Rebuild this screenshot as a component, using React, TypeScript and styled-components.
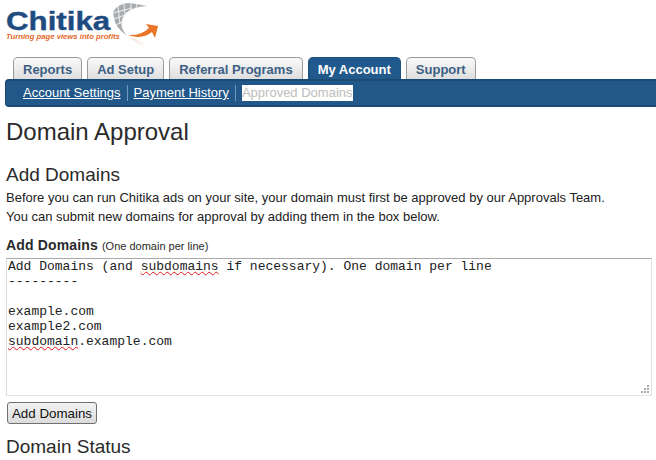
import React from 'react';
import styled, { createGlobalStyle } from 'styled-components';

const Global = createGlobalStyle`
  html, body { margin: 0; padding: 0; background: #fff; overflow: hidden; }
  body { font-family: "Liberation Sans", Arial, sans-serif; color: #222; }
`;
const Page = styled.div`width: 656px; height: 460px; overflow: hidden;`;
const Header = styled.header`height: 57px; padding-left: 6px; box-sizing: border-box;`;
const LogoWrap = styled.div`position: relative; width: 160px; height: 57px;`;
const LogoMark = styled.svg`position: absolute; left: -6px; top: 0;`;
const LogoName = styled.div`
  position: absolute; left: 0; top: 10px; font-size: 25px; font-weight: 700; line-height: 22px;
  color: #1f4c80; transform: scaleX(1.25); transform-origin: left; -webkit-text-stroke: 0.4px #1f4c80;
`;
const Tagline = styled.div`
  position: absolute; left: 0; top: 32px; font-size: 7.7px; font-weight: 700; font-style: italic;
  color: #e8692a; white-space: nowrap; line-height: 9px;
`;
const Tabs = styled.nav`display: flex; gap: 5px; padding-left: 13px; height: 22px; align-items: flex-end;`;
const Tab = styled.div<{ $active?: boolean }>`
  height: 22px; box-sizing: border-box; padding: 0 9px;
  border: 1px solid ${p => (p.$active ? '#1d4f7f' : '#9a9a9a')}; border-bottom: none;
  border-radius: 5px 5px 0 0; font-size: 13px; font-weight: 700; line-height: 23px;
  color: ${p => (p.$active ? '#fff' : '#3d5f85')};
  background: ${p => (p.$active ? 'linear-gradient(#1f5a8e,#22598b)' : 'linear-gradient(#fafafa,#dedede)')};
  white-space: nowrap;
`;
const SubBar = styled.div`
  margin-left: 5px; height: 28px; box-sizing: border-box; background: #215889;
  border-top: 2px solid #1b4a75; border-bottom: 2px solid #1b4a75; border-left: 1px solid #1b4a75;
  border-radius: 4px 0 0 4px; display: flex; align-items: center; padding-left: 17px;
`;
const SubLink = styled.a<{ $sep?: boolean }>`
  color: #fff; font-size: 13px; text-decoration: underline; line-height: 16px;
  padding-right: 6px; margin-right: 6px;
  border-right: ${p => (p.$sep ? '1px solid #6f9bc0' : 'none')};
`;
const SubCurrent = styled.span`
  background: #fff; color: #bdbdbd; font-size: 13px; line-height: 16px;
`;
const Main = styled.main`padding: 0 4px 0 6px;`;
const Title = styled.h1`font-size: 24px; font-weight: 400; margin: 11px 0 0; line-height: 28px; color: #2a2a2a;`;
const Section = styled.h2`font-size: 19px; font-weight: 400; margin: 0; line-height: 22px; color: #2a2a2a;`;
const AddHead = styled(Section)`margin-top: 18px;`;
const Para = styled.p`font-size: 13px; line-height: 19px; margin: 0; color: #222;`;
const Intro = styled.div`margin-top: 2px;`;
const Label = styled.div`font-size: 14px; font-weight: 700; line-height: 18px; margin-top: 10px; color: #2a2a2a; letter-spacing: 0.15px;`;
const Hint = styled.span`font-size: 11px; font-weight: 400; letter-spacing: 0;`;
const Area = styled.div`
  position: relative; margin-top: 3px; width: 646px; height: 138px; box-sizing: border-box;
  border: 1px solid #e2e2e2; border-top-color: #a8a8a8; border-left-color: #dcdcdc; padding: 0 1px;
  font-family: "Liberation Mono", "Courier New", monospace; font-size: 13px;
  color: #222;
`;
const AreaLine = styled.div`height: 15px; line-height: 15px; white-space: pre;`;
const Miss = styled.span`text-decoration: underline wavy #e01818; text-decoration-thickness: 1px; text-underline-offset: 1px;`;
const Grip = styled.svg`position: absolute; right: 2px; bottom: 2px;`;
const AddButton = styled.button`
  display: block; margin-top: 6px; margin-left: 1px; width: 90px; height: 22px; padding: 0;
  border: 1px solid #707070; border-radius: 3px; background: linear-gradient(#f2f2f2,#dcdcdc);
  font-family: "Liberation Sans", Arial, sans-serif; font-size: 13.33px; color: #111;
`;
const StatusHead = styled(Section)`margin-top: 12px;`;

export default function App() {
  return (
    <Page>
      <Global />
      <Header>
        <LogoWrap>
          <LogoMark width="166" height="57" viewBox="0 0 166 57">
            <defs>
              <linearGradient id="fade" x1="0" y1="0" x2="0" y2="1">
                <stop offset="0" stopColor="#e8a888" stopOpacity="0.45" />
                <stop offset="1" stopColor="#fff" stopOpacity="0" />
              </linearGradient>
            </defs>
            <path d="M129 37 Q142 40 150 50 L143 50 Q136 42 129 37Z" fill="url(#fade)" />
            <path d="M113 12 Q118 3 130 3 L147 6 Q132 7 126 13 Q120 20 122 28 Q124 33 128 36 Q118 30 115 22 Z" fill="#a9acae" />
            <path d="M118 6 L120 24 M124 4 L125 15 M131 3 L131 10 M137 4 L136 8 M113 13 L132 8 M114 19 L125 15 M116 25 L122 22" stroke="#fff" strokeWidth="0.8" fill="none" />
            <path d="M128 35 Q141 36 149 28 L146 24 L158 26 L155 38 L152 32 Q142 40 128 35Z" fill="#ea7327" />
          </LogoMark>
          <LogoName>Chitika</LogoName>
          <Tagline>Turning page views into profits</Tagline>
        </LogoWrap>
      </Header>
      <Tabs>
        <Tab>Reports</Tab>
        <Tab>Ad Setup</Tab>
        <Tab>Referral Programs</Tab>
        <Tab $active>My Account</Tab>
        <Tab>Support</Tab>
      </Tabs>
      <SubBar>
        <SubLink $sep>Account Settings</SubLink>
        <SubLink $sep>Payment History</SubLink>
        <SubCurrent>Approved Domains</SubCurrent>
      </SubBar>
      <Main>
        <Title>Domain Approval</Title>
        <AddHead>Add Domains</AddHead>
        <Intro>
          <Para>Before you can run Chitika ads on your site, your domain must first be approved by our Approvals Team.</Para>
          <Para>You can submit new domains for approval by adding them in the box below.</Para>
        </Intro>
        <Label>Add Domains <Hint>(One domain per line)</Hint></Label>
        <Area>
          <AreaLine>Add Domains (and <Miss>subdomains</Miss> if necessary). One domain per line</AreaLine>
          <AreaLine>---------</AreaLine>
          <AreaLine> </AreaLine>
          <AreaLine>example.com</AreaLine>
          <AreaLine>example2.com</AreaLine>
          <AreaLine><Miss>subdomain</Miss>.example.com</AreaLine>
          <Grip width="9" height="9" viewBox="0 0 9 9">
            <path d="M7 1h2v2H7zM4 4h2v2H4zM7 4h2v2H7zM1 7h2v2H1zM4 7h2v2H4zM7 7h2v2H7z" fill="#aaa" />
          </Grip>
        </Area>
        <AddButton>Add Domains</AddButton>
        <StatusHead>Domain Status</StatusHead>
      </Main>
    </Page>
  );
}
